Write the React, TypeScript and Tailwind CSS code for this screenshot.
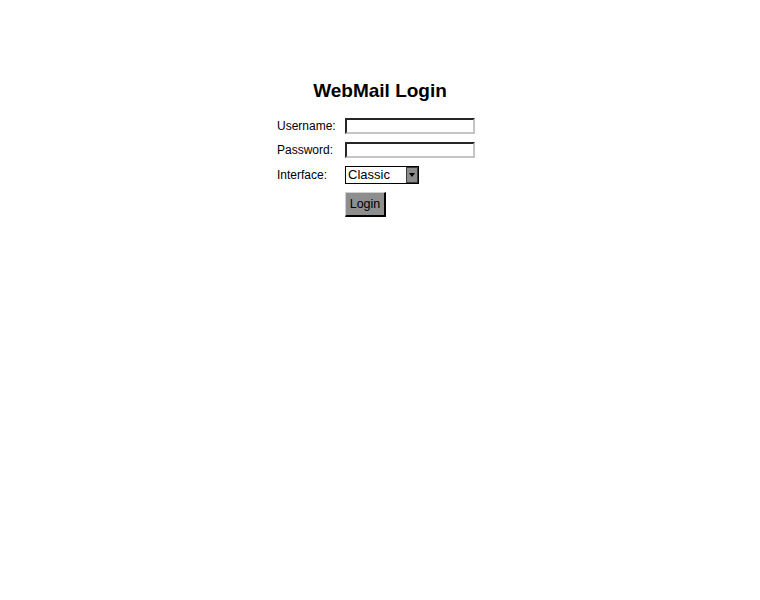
export default function App() {
  return (
    <div className="min-h-[600px] w-full bg-white pt-[80px] font-['Liberation_Sans',Arial,sans-serif] text-black">
      <h1 className="text-center text-[19px] font-bold leading-[22px]">WebMail Login</h1>
      <div className="mt-[16px] flex justify-center">
        <form className="w-[206px] pr-[8px]" onSubmit={(e) => e.preventDefault()}>
          <div className="grid grid-cols-[68px_130px] items-center gap-y-[8px] text-[12px]">
            <label htmlFor="username" className="leading-[16px]">Username:</label>
            <input
              id="username"
              type="text"
              className="h-[16px] w-[130px] border-2 border-t-[#262626] border-l-[#262626] border-r-[#c4c4c4] border-b-[#c4c4c4] bg-white px-1 text-[12px] outline-none"
            />
            <label htmlFor="password" className="leading-[16px]">Password:</label>
            <input
              id="password"
              type="password"
              className="h-[16px] w-[130px] border-2 border-t-[#262626] border-l-[#262626] border-r-[#c4c4c4] border-b-[#c4c4c4] bg-white px-1 text-[12px] outline-none"
            />
            <span className="leading-[18px]">Interface:</span>
            <div className="flex h-[18px] w-[74px] items-stretch border border-black bg-white">
              <span className="flex-1 pl-[2px] text-[13px] leading-[16px]">Classic</span>
              <span className="flex w-[12px] items-center justify-center border border-[#3a3a3a] bg-[#8c8c8c]">
                <svg width="6" height="4" viewBox="0 0 6 4">
                  <path d="M0 0h6L3 4z" fill="#000" />
                </svg>
              </span>
            </div>
            <span />
            <button
              type="submit"
              className="h-[25px] w-[41px] border border-t-[#d0d0d0] border-l-[#d0d0d0] border-r-2 border-b-2 border-r-black border-b-black bg-[#8e8e8e] text-[12.5px] leading-[20px] text-black"
            >
              Login
            </button>
          </div>
        </form>
      </div>
    </div>
  );
}
